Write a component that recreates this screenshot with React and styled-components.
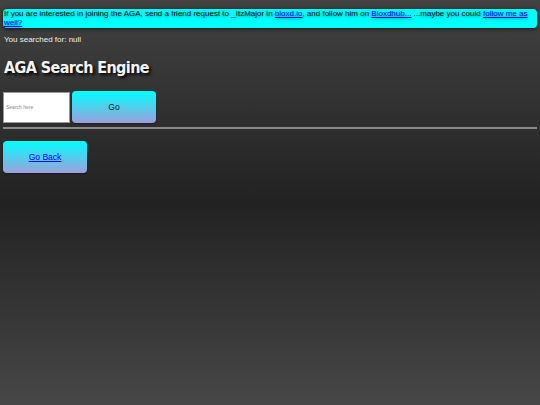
import styled, { createGlobalStyle } from "styled-components";

const GlobalStyle = createGlobalStyle`
  html, body {
    margin: 0;
    padding: 0;
  }
  body {
    min-height: 100vh;
    background: linear-gradient(#424242 0%, #222 50%, #474747 100%);
    font-family: "Liberation Sans", Arial, sans-serif;
  }
`;

export default function App() {
  return (
    <>
      <GlobalStyle />
      <Page>
        <Banner>
          If you are interested in joining the AGA, send a friend request to
          _ItzMajor in <a href="#">bloxd.io</a>, and follow him on{" "}
          <a href="#">Bloxdhub...</a> ...maybe you could{" "}
          <a href="#">follow me as well?</a>
        </Banner>
        <Searched>You searched for: null</Searched>
        <Title>AGA Search Engine</Title>
        <SearchRow>
          <SearchInput placeholder="Search here" />
          <GradientButton>Go</GradientButton>
        </SearchRow>
        <Divider />
        <GradientButton as="div">
          <a href="#">Go Back</a>
        </GradientButton>
      </Page>
    </>
  );
}

const Page = styled.div`
  padding: 9px 3px;
  display: flex;
  flex-direction: column;
  align-items: flex-start;
`;

const Banner = styled.div`
  align-self: stretch;
  background: #00ffff;
  border-radius: 4px;
  padding: 0 1px 1px;
  font-size: 8px;
  line-height: 9px;
  color: #111;
  text-shadow: 0 1px 3px rgba(0, 0, 0, 0.45);
  box-shadow: 0 1px 4px rgba(0, 0, 0, 0.6);
  a {
    color: #0000ee;
  }
`;

const Searched = styled.p`
  margin: 7px 1px 0;
  font-size: 8px;
  color: #eee;
`;

const Title = styled.h1`
  margin: 14px 1px 0;
  font-family: "DejaVu Sans", sans-serif;
  font-stretch: condensed;
  font-weight: 700;
  font-size: 16px;
  letter-spacing: -0.6px;
  color: #f4f4f4;
  text-shadow: 2px 2px 3px #000;
`;

const SearchRow = styled.div`
  display: flex;
  align-items: center;
  gap: 2px;
  margin-top: 14px;
`;

const SearchInput = styled.input`
  box-sizing: border-box;
  width: 67px;
  height: 31px;
  margin: 0;
  padding: 0 2px;
  border: 1px solid #999;
  background: #fff;
  font-family: "Liberation Sans", Arial, sans-serif;
  font-size: 5px;
  &::placeholder {
    color: #888;
  }
`;

const GradientButton = styled.button`
  box-sizing: border-box;
  display: flex;
  align-items: center;
  justify-content: center;
  width: 84px;
  height: 32px;
  border: none;
  border-radius: 4px;
  background: linear-gradient(#00ffff, #9f9fdc);
  color: #111;
  font-family: "Liberation Sans", Arial, sans-serif;
  font-size: 8.5px;
  box-shadow: 0 1px 2px rgba(0, 0, 0, 0.4);
  a {
    color: #0000ee;
  }
`;

const Divider = styled.hr`
  align-self: stretch;
  margin: 4px 0 12px;
  border: none;
  border-top: 2px solid #8a8a8a;
`;
